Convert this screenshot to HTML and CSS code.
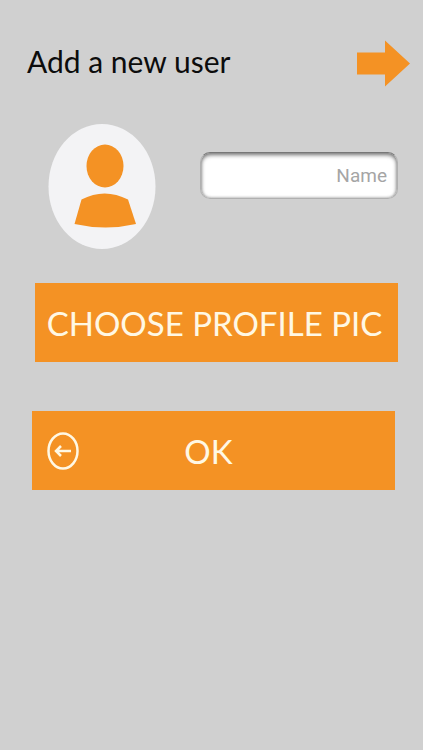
FILE: index.html
```html
<!DOCTYPE html>
<html lang="en">
<head>
<meta charset="utf-8">
<meta name="viewport" content="width=device-width, initial-scale=1">
<title>Add a new user</title>
<link rel="stylesheet" href="styles.css">
</head>
<body>
<header class="header">
  <h1 class="title">Add a new user</h1>
  <button class="next" type="button" aria-label="Next">
    <svg class="next-icon" viewBox="0 0 53 46" aria-hidden="true"><path d="M0 12H28V0L53 23L28 46V34H0Z"/></svg>
  </button>
</header>
<form class="form">
  <div class="profile">
    <svg class="avatar" viewBox="0 0 107 125" aria-hidden="true">
      <ellipse class="avatar-back" cx="53.500" cy="62.500" rx="53.500" ry="62.500"/>
      <ellipse cx="56.500" cy="42" rx="18.500" ry="21.500"/>
      <path d="M33 75.500Q56 63.500 79.500 75.500L87.500 100Q57 107 26 100Z"/>
    </svg>
    <input class="name" type="text" placeholder="Name" aria-label="Name">
  </div>
  <button class="action choose" type="button">CHOOSE PROFILE PIC</button>
  <button class="action ok" type="button">
    <svg class="back-icon" viewBox="0 0 32 38" aria-hidden="true">
      <ellipse cx="16" cy="19" rx="14.500" ry="17.500"/>
      <path d="M24 19H9M14 14L9 19L14 24"/>
    </svg>
    <span>OK</span>
  </button>
</form>
</body>
</html>
```
FILE: styles.css
```css
* {
  box-sizing: border-box;
}

body {
  margin: 0;
  min-height: 100vh;
  background: #d0d0d0;
  font-family: Lato, "Liberation Sans", sans-serif;
}

button {
  padding: 0;
  border: 0;
  font: inherit;
  cursor: pointer;
}

.header {
  display: flex;
  align-items: center;
  justify-content: space-between;
  padding: 40px 13px 0 27px;
}

.title {
  margin: 0;
  padding-bottom: 5px;
  color: #0c0c0c;
  font-size: 30px;
  font-weight: 400;
  line-height: 42px;
}

.next {
  background: none;
}

.next-icon {
  display: block;
  width: 53px;
  height: 47px;
  fill: #f49224;
}

.profile {
  display: flex;
  gap: 44px;
  padding: 37px 25px 0 48px;
}

.avatar {
  flex: none;
  width: 108px;
  height: 125px;
  fill: #f49224;
}

.avatar-back {
  fill: #f3f3f5;
}

.name {
  flex: 1;
  min-width: 0;
  height: 47px;
  margin-top: 28px;
  padding: 0 10px;
  border: 1px solid #b0b0b0;
  border-top-color: #777;
  border-radius: 10px;
  background: #fff;
  box-shadow: inset 0 2px 4px #777, inset 0 0 3px #aaa;
  color: #333;
  font-family: Roboto, "Liberation Sans", sans-serif;
  font-size: 19px;
  text-align: right;
}

.name::placeholder {
  color: #a5a5a5;
}

.action {
  display: flex;
  align-items: center;
  height: 79px;
  background: #f49224;
  color: #fff8e4;
  font-size: 33px;
  font-weight: 400;
  white-space: nowrap;
}

.choose {
  justify-content: center;
  width: calc(100% - 60px);
  margin: 34px 25px 0 35px;
  padding-right: 4px;
}

.ok {
  display: grid;
  grid-template-columns: 1fr auto 1fr;
  width: calc(100% - 60px);
  margin: 49px 28px 0 32px;
  padding: 0 25px 0 15px;
}

.back-icon {
  width: 32px;
  height: 38px;
  fill: none;
  stroke: #fff8e4;
  stroke-width: 2.500;
}
```
